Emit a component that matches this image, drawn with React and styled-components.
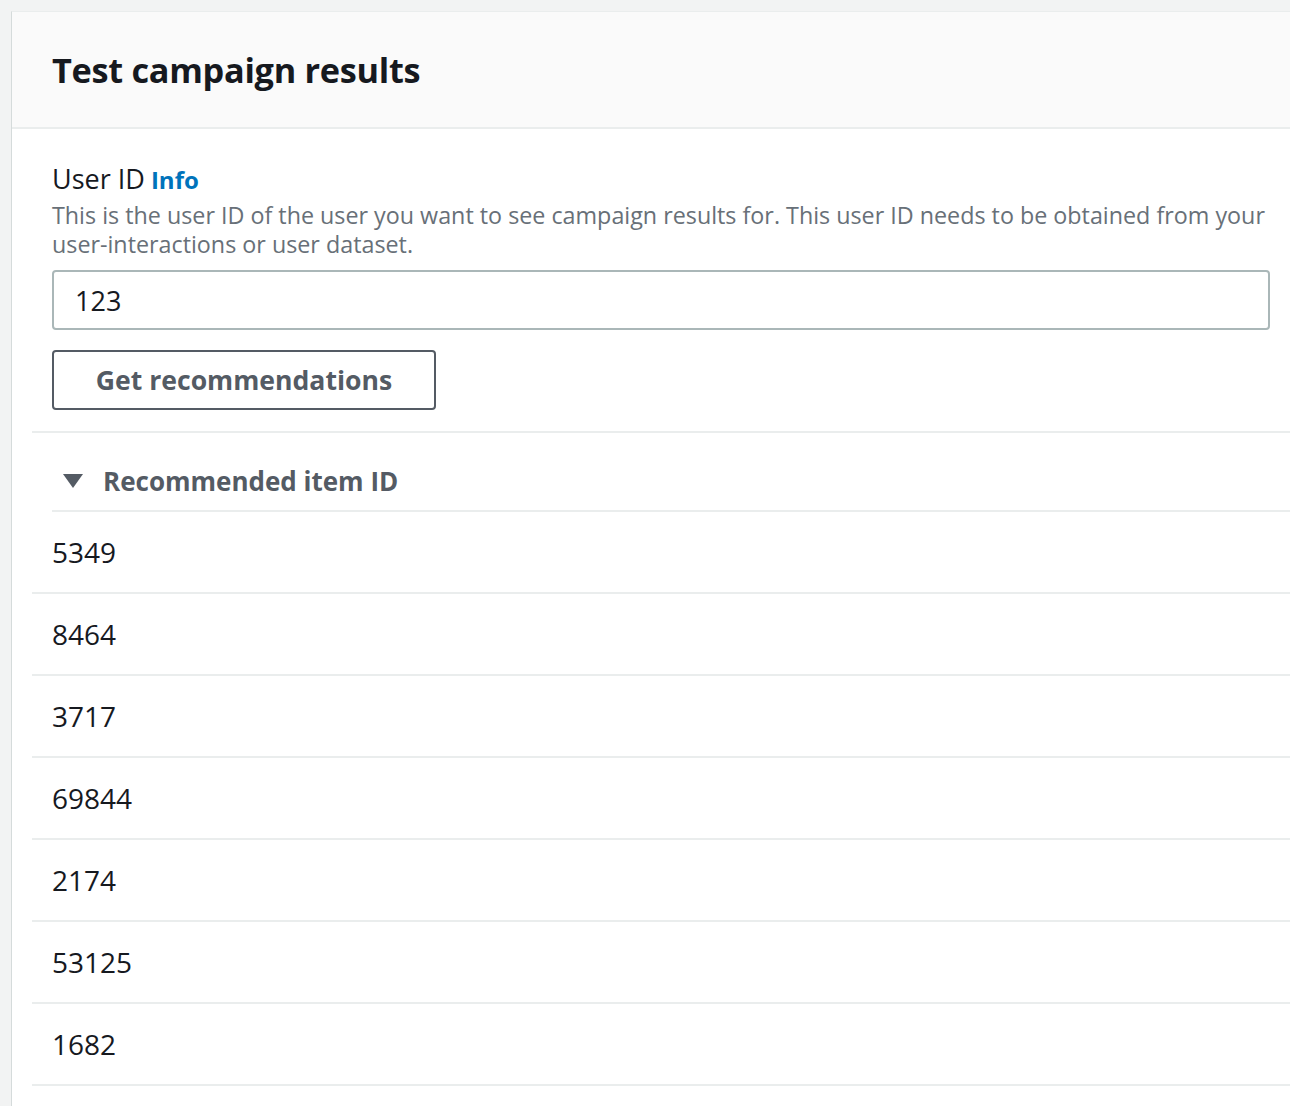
import styled, { createGlobalStyle } from "styled-components";

const GlobalStyle = createGlobalStyle`
  html, body {
    margin: 0;
    padding: 0;
    background: #f2f3f3;
    overflow: hidden;
  }
  body {
    font-family: "Open Sans", "Noto Sans", Arial, sans-serif;
    color: #16191f;
  }
`;

const Panel = styled.section`
  margin: 11px -30px 0 11px;
  background: #ffffff;
  border-left: 1px solid #d5dbdb;
  border-top: 1px solid #eaeded;
  min-height: 1100px;
`;

const PanelHeader = styled.div`
  background: #fafafa;
  height: 115px;
  display: flex;
  align-items: center;
  padding: 0 40px;
  border-bottom: 2px solid #eaeded;
`;

const Title = styled.h2`
  margin: 0;
  font-size: 34.3px;
  font-weight: 700;
  letter-spacing: -0.3px;
  color: #16191f;
`;

const PanelBody = styled.div`
  padding: 30px 50px 0 40px;
`;

const Label = styled.div`
  font-size: 27px;
  line-height: 40px;
  color: #16191f;
`;

const InfoLink = styled.a`
  color: #0073bb;
  font-weight: 700;
  font-size: 24px;
  margin-left: 6px;
  text-decoration: none;
`;

const Description = styled.p`
  margin: 1px 0 0;
  font-size: 23.3px;
  line-height: 29px;
  color: #687078;
`;

const Input = styled.input`
  display: block;
  box-sizing: border-box;
  width: 100%;
  height: 60px;
  margin-top: 11px;
  padding: 0 21px;
  border: 2px solid #aab7b8;
  border-radius: 4px;
  font-family: inherit;
  font-size: 27px;
  color: #16191f;
  outline: none;
`;

const Button = styled.button`
  display: block;
  box-sizing: border-box;
  margin-top: 20px;
  width: 384px;
  height: 60px;
  background: #ffffff;
  border: 2px solid #545b64;
  border-radius: 4px;
  font-family: inherit;
  font-size: 26.6px;
  font-weight: 700;
  color: #545b64;
  cursor: pointer;
`;

const Table = styled.div`
  margin: 21px -50px 0 -20px;
  border-top: 2px solid #eaeded;
`;

const HeaderCell = styled.div`
  margin-left: 20px;
  padding: 28px 0 9px 11px;
  display: flex;
  align-items: center;
  gap: 20px;
  line-height: 40px;
  font-size: 26px;
  font-weight: 700;
  color: #545b64;
  border-bottom: 2px solid #eaeded;
`;

const Caret = styled.svg`
  width: 20px;
  height: 14px;
  flex: none;
`;

const Row = styled.div`
  padding-left: 20px;
  line-height: 80px;
  font-size: 28px;
  color: #16191f;
  border-bottom: 2px solid #eaeded;
`;

const items = ["5349", "8464", "3717", "69844", "2174", "53125", "1682"];

export default function App() {
  return (
    <>
      <GlobalStyle />
      <Panel>
        <PanelHeader>
          <Title>Test campaign results</Title>
        </PanelHeader>
        <PanelBody>
          <Label>
            User ID<InfoLink href="#">Info</InfoLink>
          </Label>
          <Description>
            This is the user ID of the user you want to see campaign results for. This user ID
            needs to be obtained from your user-interactions or user dataset.
          </Description>
          <Input defaultValue="123" />
          <Button>Get recommendations</Button>
          <Table>
            <HeaderCell>
              <Caret viewBox="0 0 20 14">
                <path d="M0 0 H20 L10 14 Z" fill="#545b64" />
              </Caret>
              Recommended item ID
            </HeaderCell>
            {items.map((id) => (
              <Row key={id}>{id}</Row>
            ))}
          </Table>
        </PanelBody>
      </Panel>
    </>
  );
}
